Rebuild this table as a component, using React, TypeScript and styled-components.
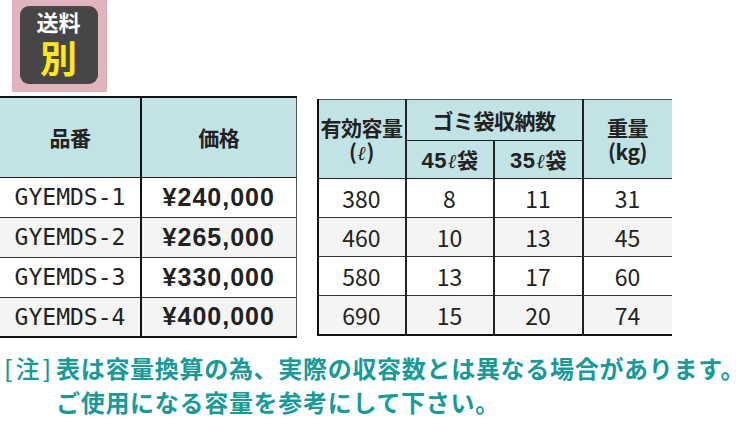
import React from "react";
import styled, { createGlobalStyle } from "styled-components";

const GlobalStyle = createGlobalStyle`
  html, body { margin: 0; padding: 0; background: #ffffff; }
  body { font-family: "Noto Sans CJK JP", "Noto Sans", sans-serif; color: #222; }
  * { box-sizing: border-box; }
`;

const Page = styled.div`
  width: 745px;
  height: 421px;
  overflow: hidden;
  display: flex;
  flex-direction: column;
`;

const BadgeArea = styled.div`
  margin-left: 12px;
  width: 95px;
  height: 92px;
  background: #e0b3bd;
  display: flex;
  align-items: flex-start;
  justify-content: center;
  padding-top: 6px;
  padding-right: 2px;
`;

const Badge = styled.div`
  width: 78px;
  height: 78px;
  background: #464646;
  border-radius: 9px;
  display: flex;
  flex-direction: column;
  align-items: center;
  font-family: "Noto Sans CJK JP", sans-serif;
  font-weight: 700;
`;

const BadgeTop = styled.span`
  color: #ffffff;
  font-size: 22px;
  line-height: 22px;
  margin-top: 4px;
`;

const BadgeMain = styled.span`
  color: #ffe81a;
  font-size: 37px;
  line-height: 38px;
  margin-top: 6px;
`;

const TablesRow = styled.div`
  display: flex;
  align-items: flex-start;
  gap: 20px;
  margin-top: 4px;
`;

const LeftTable = styled.table`
  width: 296px;
  border-collapse: collapse;
  table-layout: fixed;
  border-top: 2px solid #111;
  border-bottom: 2px solid #111;
`;

const RightTable = styled.table`
  width: 354px;
  margin-top: 3px;
  border-collapse: collapse;
  table-layout: fixed;
  border-top: 1px solid #555;
  border-left: 2px solid #111;
  border-bottom: 2px solid #111;
`;

const Th = styled.th<{ $h?: number; $right?: string; $bottom?: string }>`
  background: #c2e3e6;
  font-family: "Noto Sans CJK JP", sans-serif;
  font-weight: 700;
  font-size: 21px;
  line-height: 24px;
  color: #222;
  padding: 0;
  text-align: center;
  vertical-align: middle;
  height: ${(p) => p.$h ?? 40}px;
  border-right: ${(p) => p.$right ?? "none"};
  border-bottom: ${(p) => p.$bottom ?? "1px solid #222"};
  letter-spacing: -0.5px;
  white-space: nowrap;
`;

const Row = styled.tr<{ $shade?: boolean }>`
  background: ${(p) => (p.$shade ? "#f4f4f4" : "#ffffff")};
  border-bottom: 1px solid #333;
`;

const CodeCell = styled.td`
  height: 40px;
  padding: 0;
  text-align: center;
  vertical-align: middle;
  font-family: "DejaVu Sans Mono", "Liberation Mono", monospace;
  font-size: 23px;
  color: #222;
  border-right: 2px solid #111;
`;

const PriceCell = styled.td`
  height: 40px;
  padding: 0;
  text-align: center;
  vertical-align: middle;
  font-family: "Liberation Sans", Arial, sans-serif;
  font-weight: 700;
  font-size: 25px;
  letter-spacing: 1px;
  color: #222;
  border-right: 1px solid #555;
`;

const NumCell = styled.td<{ $last?: boolean }>`
  height: 39px;
  padding: 0;
  text-align: center;
  vertical-align: middle;
  font-family: "Noto Sans CJK JP", "Liberation Sans", sans-serif;
  font-size: 23px;
  color: #222;
  border-right: ${(p) => (p.$last ? "none" : "2px solid #222")};
`;

const SubNum = styled.span`
  font-family: "Liberation Sans", sans-serif;
  font-weight: 700;
  font-size: 22px;
  letter-spacing: 0.5px;
`;

const Litre = styled.span`
  font-family: "DejaVu Serif", serif;
  font-style: italic;
  font-weight: 700;
  font-size: 20px;
  line-height: 20px;
  margin: 0 1px;
`;

const Note = styled.div`
  margin-top: 13px;
  display: flex;
  color: #179a9a;
  font-family: "Noto Sans CJK JP", sans-serif;
  font-weight: 700;
  font-size: 24px;
  line-height: 34px;
`;

const NoteLabel = styled.span`
  width: 56px;
  flex: none;
  padding-left: 4px;
  white-space: nowrap;
  letter-spacing: 3px;
  font-weight: 500;
`;

const NoteBody = styled.div`
  white-space: nowrap;
  letter-spacing: 0.7px;
`;

const leftRows = [
  ["GYEMDS-1", "¥240,000"],
  ["GYEMDS-2", "¥265,000"],
  ["GYEMDS-3", "¥330,000"],
  ["GYEMDS-4", "¥400,000"],
];

const rightRows = [
  ["380", "8", "11", "31"],
  ["460", "10", "13", "45"],
  ["580", "13", "17", "60"],
  ["690", "15", "20", "74"],
];

export default function App() {
  return (
    <Page>
      <GlobalStyle />
      <BadgeArea>
        <Badge>
          <BadgeTop>送料</BadgeTop>
          <BadgeMain>別</BadgeMain>
        </Badge>
      </BadgeArea>
      <TablesRow>
        <LeftTable>
          <colgroup>
            <col style={{ width: 141 }} />
            <col style={{ width: 155 }} />
          </colgroup>
          <thead>
            <tr>
              <Th $h={80} $right="2px solid #111">品番</Th>
              <Th $h={80} $right="1px solid #555">価格</Th>
            </tr>
          </thead>
          <tbody>
            {leftRows.map((r, i) => (
              <Row key={r[0]} $shade={i % 2 === 1}>
                <CodeCell>{r[0]}</CodeCell>
                <PriceCell>{r[1]}</PriceCell>
              </Row>
            ))}
          </tbody>
        </LeftTable>
        <RightTable>
          <colgroup>
            <col style={{ width: 88 }} />
            <col style={{ width: 88 }} />
            <col style={{ width: 89 }} />
            <col style={{ width: 89 }} />
          </colgroup>
          <thead>
            <tr>
              <Th rowSpan={2} $h={41} $right="2px solid #222">
                有効容量
                <br />
                (<Litre>ℓ</Litre>)
              </Th>
              <Th colSpan={2} $h={41} $right="2px solid #222">
                ゴミ袋収納数
              </Th>
              <Th rowSpan={2} $h={41}>
                重量
                <br />
                (kg)
              </Th>
            </tr>
            <tr>
              <Th $h={38} $right="2px solid #222">
                <SubNum>45</SubNum>
                <Litre>ℓ</Litre>袋
              </Th>
              <Th $h={38} $right="2px solid #222">
                <SubNum>35</SubNum>
                <Litre>ℓ</Litre>袋
              </Th>
            </tr>
          </thead>
          <tbody>
            {rightRows.map((r, i) => (
              <Row key={r[0]} $shade={i % 2 === 1}>
                {r.map((v, j) => (
                  <NumCell key={j} $last={j === 3}>
                    {v}
                  </NumCell>
                ))}
              </Row>
            ))}
          </tbody>
        </RightTable>
      </TablesRow>
      <Note>
        <NoteLabel>[注]</NoteLabel>
        <NoteBody>
          表は容量換算の為、実際の収容数とは異なる場合があります。
          <br />
          ご使用になる容量を参考にして下さい。
        </NoteBody>
      </Note>
    </Page>
  );
}
